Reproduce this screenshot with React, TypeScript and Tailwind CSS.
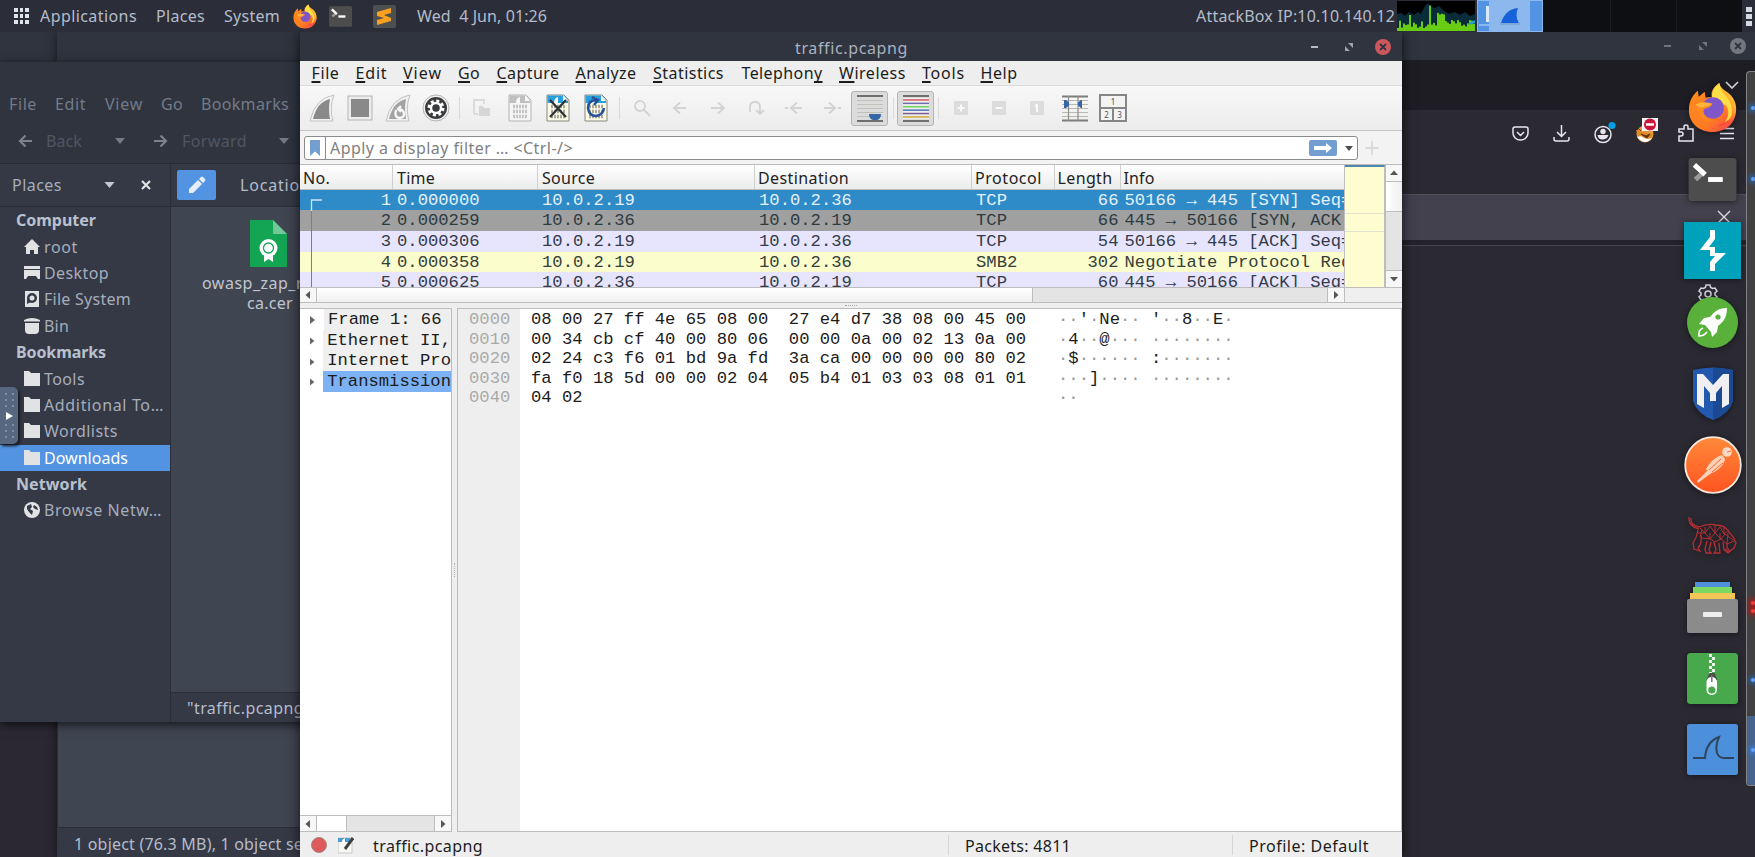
import { useLayoutEffect, useRef, useState } from "react";
import type { ReactNode } from "react";

/** Single line label, tracked so that it fills the given width. */
function T({ w, className = "", children }: { w: number; className?: string; children: ReactNode }) {
  const ref = useRef<HTMLSpanElement>(null);
  const [gap, setGap] = useState(0);
  useLayoutEffect(() => {
    const el = ref.current;
    if (!el) return;
    const n = (el.textContent || "").length;
    setGap((w - el.getBoundingClientRect().width) / Math.max(n, 1));
  }, [w]);
  return (
    <span ref={ref} className={`inline-block shrink-0 whitespace-pre ${className}`} style={{ letterSpacing: gap }}>
      {children}
    </span>
  );
}

/* ---------- small drawings ---------- */

function Firefox({ className }: { className: string }) {
  return (
    <svg viewBox="0 0 50 52" className={className}>
      <defs>
        <linearGradient id="ffa" x1="0.9" y1="0" x2="0.2" y2="1">
          <stop offset="0" stopColor="#ffe14a" />
          <stop offset="0.35" stopColor="#ffb02e" />
          <stop offset="0.7" stopColor="#ff5a2c" />
          <stop offset="1" stopColor="#f0305e" />
        </linearGradient>
        <linearGradient id="ffb" x1="0" y1="0" x2="1" y2="1">
          <stop offset="0" stopColor="#ff8a1e" />
          <stop offset="0.6" stopColor="#ff7b22" />
          <stop offset="1" stopColor="#f23a55" />
        </linearGradient>
      </defs>
      <path d="M10 9l1 6 6-5 1 6c3-1 6-1 9 0l22 11c1 14-10 24-24 24S0 41 1 27c0-7 4-14 9-18z" fill="url(#ffb)" />
      <path d="M32 1c-9 6-9 12-7 17l13 12c3 6-1 13-8 15 12 0 18-8 19-16 1-7-3-14-8-18-4-3-8-5-9-10z" fill="url(#ffa)" />
      <path d="M32 1c-8 6-8 12-7 17l14 6c4 6 2 13-2 17 8-3 9-10 7-17-2-9-11-12-12-23z" fill="#ffdf45" />
      <circle cx="25.500" cy="26.500" r="11" fill="#7f56c9" />
      <path d="M8 23c5-4 11-2 17-1-1 4-6 4-9 6-1 6 3 10 9 12-10 1-16-6-17-17z" fill="#ff8b22" />
      <path d="M8 23c5-3 11-2 16-1-2 3-6 3-9 4-4 0-6-1-7-3z" fill="#ffb43a" />
    </svg>
  );
}

function Folder() {
  return (
    <svg viewBox="0 0 16 16" className="h-4 w-4">
      <path d="M0 0h5l2 2h9v13H0z" fill="#e1e2e3" />
    </svg>
  );
}

const sideIcons: Record<string, ReactNode> = {
  root: (
    <svg viewBox="0 0 16 16" className="h-4 w-4">
      <path d="M8 0l8 8h-2v7h-4v-4H6v4H2V8H0z" fill="#e1e2e3" />
    </svg>
  ),
  Desktop: (
    <svg viewBox="0 0 16 16" className="h-4 w-4">
      <path d="M0 1h16v3H0zM0 5h16v9h-2l-2-3H4l-2 3H0z" fill="#e1e2e3" />
    </svg>
  ),
  "File System": (
    <svg viewBox="0 0 16 16" className="h-4 w-4">
      <path d="M1 0h14v16H1z" fill="#e1e2e3" />
      <circle cx="8" cy="7" r="5" fill="#353945" />
      <circle cx="8" cy="7" r="2.500" fill="#e1e2e3" />
      <path d="M3 8v5l4-2z" fill="#353945" />
    </svg>
  ),
  Bin: (
    <svg viewBox="0 0 16 16" className="h-4 w-4">
      <path d="M0 2q8-4 16 0v1.500H0zM1 5h14v7q0 4-4 4H5q-4 0-4-4z" fill="#e1e2e3" />
    </svg>
  ),
  "Browse Netw…": (
    <svg viewBox="0 0 16 16" className="h-4 w-4">
      <circle cx="8" cy="8" r="8" fill="#e1e2e3" />
      <path d="M3 4l4-2 1 3-2 2 3 2-1 4-3-3-2-3zM10 3l3 2 1 3-3-1-2-2z" fill="#353945" />
    </svg>
  ),
};

function Caret({ className }: { className: string }) {
  return (
    <svg viewBox="0 0 10 6" className={className}>
      <path d="M0 0h10L5 6z" fill="currentColor" />
    </svg>
  );
}

/* ---------- top panel ---------- */

function TerminalIcon({ className }: { className: string }) {
  return (
    <svg viewBox="0 0 49 44" className={className}>
      <rect width="49" height="44" rx="3" fill="#4d4d4d" />
      <path d="M7 22l8-7" stroke="#9a9a9a" strokeWidth="5" />
      <path d="M6 7l11 10" stroke="#fff" strokeWidth="5" />
      <path d="M20 22h15" stroke="#fff" strokeWidth="5" />
    </svg>
  );
}

function CpuGraph() {
  const n = 39;
  const bars = Array.from({ length: n }, (_, i) => {
    const r = Math.abs(Math.sin(i * 12.9898) * 43758.5453) % 1;
    const hump = i > 19 && i < 24 ? 9 : 0;
    return 3 + r * 8 + hump + (i === 16 ? 15 : 0) + (i === 6 ? 8 : 0);
  });
  return (
    <svg viewBox="0 0 78 30" className="h-[30px] w-[78px] bg-black">
      <path d="M0 30V13l5-1 3 3 4-4 5 3 4-3 3 2 4-8 3-3 3 4 4 1 4-2 4 4 6 4 6-2 5 3 5-3 5 4 5-2V30z" fill="#0a2b38" />
      {bars.map((h, i) => (
        <rect key={i} x={i * 2} y={30 - h} width="2" height={h} fill="#67cc12" />
      ))}
      <path d="M72 22l6-3v3l-6 2z" fill="#1d9be0" />
    </svg>
  );
}

function TopPanel() {
  return (
    <header className="absolute inset-x-0 top-0 flex h-8 items-center bg-[#2b2e39] text-[#b4bccb]">
      <div className="ml-[14px] grid w-[15px] grid-cols-3 gap-[2px]">
        {Array.from({ length: 9 }, (_, i) => (
          <i key={i} className="h-[4px] w-[3.600px] bg-[#dfe3ea]" />
        ))}
      </div>
      <T w={97} className="ml-[11px]">Applications</T>
      <T w={49} className="ml-[19px]">Places</T>
      <T w={56} className="ml-[19px]">System</T>
      <Firefox className="ml-[13px] h-[25px] w-[24px]" />
      <TerminalIcon className="ml-[12px] h-[21px] w-[23px]" />
      <svg viewBox="0 0 23 23" className="ml-[21px] h-[23px] w-[23px]">
        <rect width="23" height="23" rx="2" fill="#4e4f50" />
        <path d="M4 7l14-4v5l-7 2 7 3v3L4 20v-5l7-2-7-2z" fill="#fba01f" />
      </svg>
      <T w={130} className="ml-[21px]">{"Wed  4 Jun, 01:26"}</T>
      <T w={199} className="ml-auto">AttackBox IP:10.10.140.12</T>
      <div className="ml-[2px]">
        <CpuGraph />
      </div>
      <div className="ml-[2px] flex h-8 w-[265px] bg-[#0e0f13]">
        <div className="flex h-8 w-[66px] border border-[#8ab8ee] bg-[#5294e2]">
          <div className="flex w-[11px] flex-col items-end justify-between py-[5px]">
            <i className="h-[16px] w-[3px] bg-[#dbe9fa]" />
            <i className="h-[2px] w-[10px] bg-[#8ab8ee]" />
          </div>
          <div className="flex w-[41px] items-center justify-center bg-[#8cb8ee]">
            <svg viewBox="0 0 20 18" className="h-[18px] w-[20px]">
              <path d="M1 16C4 7 9 2 18 1c-2 5-2 10 1 15z" fill="#1762d8" />
              <path d="M0 17h20" stroke="#6f93c2" />
            </svg>
          </div>
        </div>
        <div className="w-[68px] border-r border-[#1a1b20]" />
        <div className="w-[66px] border-r border-[#1a1b20]" />
      </div>
      <div className="mr-[3px] ml-[4px] flex flex-col gap-[2px]">
        <i className="h-[5px] w-[6px] bg-[#d5d9e0]" />
        <i className="h-[5px] w-[6px] bg-[#d5d9e0]" />
        <i className="h-[5px] w-[6px] bg-[#d5d9e0]" />
      </div>
    </header>
  );
}

/* ---------- file manager windows ---------- */

function SideHead({ w, children }: { w: number; children: string }) {
  return (
    <div className="flex h-[26.400px] items-center pl-[16px] font-bold text-[#b9c1d0]">
      <T w={w}>{children}</T>
    </div>
  );
}

function SideItem({ w, name, active = false }: { w: number; name: string; active?: boolean }) {
  return (
    <div
      className={`flex h-[26.400px] items-center gap-[4px] pl-[24px] ${
        active ? "bg-[#5294e2] text-white" : "text-[#a6adbb]"
      }`}
    >
      {sideIcons[name] ?? <Folder />}
      <T w={w}>{name}</T>
    </div>
  );
}

function BackWindow() {
  return (
    <section className="absolute top-8 left-[57px] flex h-[825px] w-[260px] flex-col bg-[#2f343f] shadow-[0_0_10px_rgba(0,0,0,0.6)]">
      <div className="h-[29px]" />
      <div className="flex-1 border-l border-[#2b2e39] bg-[#404552]" />
      <div className="flex h-[30px] items-center border-t border-[#2b2e39] bg-[#353945] pl-[17px] text-[#b4bccb]">
        <T w={229} className="mt-[2px]">1 object (76.3 MB), 1 object se</T>
      </div>
    </section>
  );
}

function FileManager() {
  return (
    <section className="absolute top-[61px] left-0 flex h-[661px] w-[310px] flex-col border-t border-[#252933] bg-[#2f343f] shadow-[0_3px_9px_rgba(0,0,0,0.65)]">
      <div className="flex h-[84px] items-center text-[#747a88]">
        <T w={28} className="ml-[9px]">File</T>
        <T w={31} className="ml-[18px]">Edit</T>
        <T w={38} className="ml-[19px]">View</T>
        <T w={22} className="ml-[18px]">Go</T>
        <T w={88} className="ml-[18px]">Bookmarks</T>
      </div>
      <div className="-mt-[25px] flex h-[42px] items-center pb-[3px] text-[#50565f]">
        <svg viewBox="0 0 14 14" className="ml-[18px] h-[14px] w-[14px]">
          <path d="M14 7H2M7.500 1.500L2 7l5.500 5.500" stroke="#7d828d" strokeWidth="2.200" fill="none" />
        </svg>
        <T w={36} className="ml-[14px] text-[#505663]">Back</T>
        <Caret className="ml-[33px] h-[6px] w-[10px] text-[#747a85]" />
        <svg viewBox="0 0 14 14" className="ml-[29px] h-[14px] w-[14px]">
          <path d="M0 7h12M6.500 1.500L12 7l-5.500 5.500" stroke="#7d828d" strokeWidth="2.200" fill="none" />
        </svg>
        <T w={65} className="ml-[14px] text-[#505663]">Forward</T>
        <Caret className="ml-[32px] h-[6px] w-[10px] text-[#747a85]" />
      </div>
      <div className="flex min-h-0 flex-1 border-t border-[#272a34]">
        <aside className="flex w-[171px] shrink-0 flex-col border-r border-[#2b2e39] bg-[#353945]">
          <div className="flex h-[43px] items-center border-b border-[#2b2e39] bg-[#353945] text-[#a6adbb]">
            <T w={50} className="ml-[12px]">Places</T>
            <Caret className="ml-[42px] h-[6px] w-[11px] text-[#c3c8d1]" />
            <svg viewBox="0 0 10 10" className="ml-[26px] h-[10px] w-[10px]">
              <path d="M1 1l8 8M9 1L1 9" stroke="#dfe2e6" strokeWidth="2.200" />
            </svg>
          </div>
          <SideHead w={80}>Computer</SideHead>
          <SideItem w={34} name="root" />
          <SideItem w={65} name="Desktop" />
          <SideItem w={87} name="File System" />
          <SideItem w={25} name="Bin" />
          <SideHead w={90}>Bookmarks</SideHead>
          <SideItem w={41} name="Tools" />
          <SideItem w={120} name="Additional To…" />
          <SideItem w={74} name="Wordlists" />
          <SideItem w={84} name="Downloads" active />
          <SideHead w={71}>Network</SideHead>
          <SideItem w={118} name="Browse Netw…" />
        </aside>
        <div className="flex flex-1 flex-col bg-[#404552]">
          <div className="flex h-[43px] shrink-0 items-center border-b border-[#2b2e39] bg-[#353945] text-[#b4bccb]">
            <div className="ml-[6px] flex h-[30px] w-[39px] items-center justify-center rounded-[2px] bg-[#5294e2]">
              <svg viewBox="0 0 18 18" className="h-[18px] w-[18px]">
                <path d="M1 17v-4l9-9 4 4-9 9zM11 3l2-2q1-1 2 0l2 2q1 1 0 2l-2 2z" fill="#e8eef7" />
              </svg>
            </div>
            <T w={60} className="ml-[24px]">Locatio</T>
          </div>
          <div className="flex flex-1 flex-col pt-[13px] text-[#c0c6d0]">
            <svg viewBox="0 0 37 47" className="ml-[79px] h-[47px] w-[37px]">
              <path d="M1 0h22l14 14v32q0 1-1 1H1q-1 0-1-1V1q0-1 1-1z" fill="#13a454" />
              <path d="M23 0l14 14H24q-1 0-1-1z" fill="#74c898" />
              <path d="M14 34l9 0v8l-4.500-3-4.500 3z" fill="#fff" />
              <circle cx="18.500" cy="28" r="9" fill="#fff" />
              <circle cx="18.500" cy="28" r="5" fill="none" stroke="#13a454" strokeWidth="1.300" />
            </svg>
            <T w={101} className="mt-[6px] ml-[31px] self-start leading-[20px]">owasp_zap_r</T>
            <T w={46} className="ml-[76px] self-start leading-[20px]">ca.cer</T>
          </div>
          <div className="flex h-[30px] items-center border-t border-[#2b2e39] bg-[#353945] text-[#b4bccb]">
            <T w={117} className="mt-px ml-[16px]">"traffic.pcapng</T>
          </div>
        </div>
      </div>
    </section>
  );
}

/* ---------- browser window ---------- */

function Browser() {
  return (
    <section className="absolute top-8 right-0 flex h-[825px] w-[360px] flex-col bg-[#2b2a33]">
      <div className="flex h-[28px] items-center justify-end bg-[#2f343f] pr-[9px]">
        <i className="mr-[28px] h-[2px] w-[7px] bg-[#70747e]" />
        <svg viewBox="0 0 8 8" className="mr-[23px] h-[8px] w-[8px]">
          <path d="M3 0h5v5zM0 3l5 5H0z" fill="#70747e" />
        </svg>
        <svg viewBox="0 0 16 16" className="h-4 w-4">
          <circle cx="8" cy="8" r="8" fill="#74777e" />
          <path d="M5 5l6 6M11 5l-6 6" stroke="#2f343f" strokeWidth="1.800" />
        </svg>
      </div>
      <div className="flex h-[50px] justify-end bg-[#1e1d24] pt-[21px] pr-[16px]">
        <svg viewBox="0 0 14 8" className="h-[8px] w-[14px]">
          <path d="M1 1l6 6 6-6" stroke="#d6d5dc" strokeWidth="1.600" fill="none" />
        </svg>
      </div>
      <div className="flex h-[84px] items-start pt-[8px] pl-[117px] text-[#e8e7ee]">
        <svg viewBox="0 0 17 18" className="mt-[7px] h-[18px] w-[17px]" fill="none" stroke="currentColor" strokeWidth="1.500">
          <path d="M3 2h11q2 0 2 2v4a7.500 7 0 0 1-15 0V4q0-2 2-2zM5 7l3.500 3.500L12 7" />
        </svg>
        <svg viewBox="0 0 17 18" className="ml-[24px] mt-[7px] h-[18px] w-[17px]" fill="none" stroke="currentColor" strokeWidth="1.500">
          <path d="M8.500 0v11M4 7l4.500 4.500L13 7M1 12v2q0 2 2 2h11q2 0 2-2v-2" />
        </svg>
        <svg viewBox="0 0 22 24" className="ml-[24px] mt-[2px] h-[24px] w-[22px]">
          <circle cx="9" cy="14.500" r="8" fill="none" stroke="currentColor" strokeWidth="1.500" />
          <circle cx="9" cy="11.500" r="2.700" fill="currentColor" />
          <path d="M3.500 15h11q-1 4-5.500 4.500T3.500 15z" fill="currentColor" />
          <circle cx="18" cy="5.500" r="3.500" fill="#00a0e8" />
        </svg>
        <svg viewBox="0 0 23 26" className="ml-[19px] h-[26px] w-[23px]">
          <circle cx="10" cy="16" r="8.500" fill="#e9973a" />
          <path d="M1 12l6 2 4 1 7 1-3 6-5 1-6-2z" fill="#e08a22" />
          <path d="M2 19q4 5 8 5t7-4l-4 1-4-1-3-2z" fill="#fff" />
          <path d="M3 10l3 3M6 16l5 2 4-2-3 4z" stroke="#5b3414" fill="#5b3414" />
          <rect x="7" width="16" height="13" fill="#f5f3f3" />
          <circle cx="15" cy="6.500" r="6" fill="#c9163a" />
          <path d="M11 6.500h8" stroke="#fff" strokeWidth="2.500" />
        </svg>
        <svg viewBox="0 0 16 18" className="ml-[20px] mt-[6px] h-[18px] w-[16px]" fill="none" stroke="currentColor" strokeWidth="1.500">
          <path d="M1 17V12h2q2 0 2-2T3 8H1V5h5V3a2 2 0 0 1 4 0v2h5v12z" />
        </svg>
        <svg viewBox="0 0 14 14" className="ml-[26px] mt-[9px] h-[14px] w-[14px]" stroke="currentColor" strokeWidth="1.500">
          <path d="M0 1.500h14M0 6.500h14M0 11.500h14" />
        </svg>
      </div>
      <div className="flex h-[46px] justify-end border-t border-[#504f5a] bg-[#42414d] pt-[15px] pr-[24px]">
        <svg viewBox="0 0 14 14" className="h-[14px] w-[14px]">
          <path d="M1 1l12 12M13 1L1 13" stroke="#dddce3" strokeWidth="1.400" />
        </svg>
      </div>
      <div className="h-[6px] border-b border-[#46454f] bg-[#24232b]" />
      <div className="flex justify-end pt-[38px] pr-[37px]">
        <svg viewBox="0 0 20 20" className="h-[20px] w-[20px]" fill="none" stroke="#d5d4dc" strokeWidth="1.500">
          <circle cx="10" cy="10" r="3" />
          <path d="M8 1h4l.600 2.500 2 1L17 4l2 3.200L17 9v2l2 1.800-2 3.200-2.400-.5-2 1L12 19H8l-.600-2.500-2-1L3 16l-2-3.200L3 11V9L1 7.200 3 4l2.400.5 2-1z" />
        </svg>
      </div>
    </section>
  );
}

/* ---------- dock ---------- */

function Dock() {
  return (
    <>
      <div className="absolute top-[71px] right-0 flex h-[715px] w-[9px] flex-col items-end rounded-l-[4px] border border-r-0 border-[#858585] bg-[#414141]">
        <i className="mt-[34px] h-[4px] w-[4px] rounded-full bg-[#5ba3ff] shadow-[0_0_5px_2px_#2b66b5]" />
        <i className="mt-[67px] h-[4px] w-[4px] rounded-full bg-[#5ba3ff] shadow-[0_0_5px_2px_#2b66b5]" />
        <i className="mt-[420px] h-[4px] w-[4px] rounded-full bg-[#ff3b3b] shadow-[0_0_5px_2px_#c11]" />
        <i className="mt-[4px] h-[4px] w-[4px] rounded-full bg-[#ff3b3b] shadow-[0_0_5px_2px_#c11]" />
        <i className="mt-[65px] h-[4px] w-[4px] rounded-full bg-[#5ba3ff] shadow-[0_0_5px_2px_#2b66b5]" />
        <div className="mt-[34px] flex w-full flex-1 justify-end rounded-bl-[3px] bg-[#45648f] pt-[32px]">
          <i className="h-[4px] w-[4px] rounded-full bg-[#5ba3ff] shadow-[0_0_5px_2px_#3b7ed5]" />
        </div>
      </div>
      <nav className="absolute top-[82px] left-[1684px] flex w-[57px] flex-col items-center drop-shadow-[0_1px_3px_rgba(0,0,0,0.5)]">
        <Firefox className="h-[51px] w-[49px]" />
        <TerminalIcon className="mt-[25px] h-[43px] w-[49px]" />
        <svg viewBox="0 0 57 57" className="mt-[21px] h-[57px] w-[57px]">
          <rect width="57" height="57" fill="#00a2bb" />
          <path d="M26 8h5v9l-6 8h6v6h11L31 42v7h-5v-9l5-6h-5v-6H16l10-13z" fill="#fff" />
        </svg>
        <svg viewBox="0 0 51 51" className="mt-[18px] h-[51px] w-[51px]">
          <circle cx="25.500" cy="25.500" r="25.500" fill="#59b13c" />
          <path d="M40 11c-8 0-12 3-17 9l-6 1-5 6 6 1 6 7 1 5 5-5 1-6c7-5 9-11 9-18z" fill="#fff" />
          <circle cx="31" cy="20" r="2.600" fill="#59b13c" />
          <path d="M16 31q-5 2-4 8 5 0 8-4" fill="none" stroke="#fff" strokeWidth="1.500" />
        </svg>
        <svg viewBox="0 0 40 53" className="mt-[19px] h-[53px] w-[40px]">
          <path d="M0 3q20-5 40 0v31q-4 13-20 19Q4 47 0 34z" fill="#2259ae" />
          <path d="M20 1q11 0 20 2v31q-4 13-20 19z" fill="#1c4993" />
          <path d="M4 7h6l10 11L30 7h6v30l-7 4V19l-6 7v8h-6v-8l-6-7v22l-7-4z" fill="#f0f0f2" />
        </svg>
        <svg viewBox="0 0 58 58" className="mt-[16px] h-[58px] w-[58px]">
          <defs>
            <linearGradient id="pm" x1="0" y1="0" x2="0" y2="1">
              <stop offset="0" stopColor="#ff8a3a" />
              <stop offset="1" stopColor="#ff5320" />
            </linearGradient>
          </defs>
          <circle cx="29" cy="29" r="27.800" fill="url(#pm)" stroke="#fbe9df" strokeWidth="1.800" />
          <circle cx="43" cy="16" r="4.800" fill="#fdd9c4" />
          <path d="M38 19l3 4c-1 7-8 12-15 15l-12 9-1-2 11-11c-3 1-2-2 0-4 3-5 8-9 14-11z" fill="#fdd0b8" />
          <path d="M37 23L25 34M39 27L28 36" stroke="#ff6a2c" strokeWidth="1" />
          <path d="M43 16l4-1" stroke="#ff7a36" strokeWidth="1" />
        </svg>
        <svg viewBox="0 0 51 40" className="mt-[22px] h-[40px] w-[51px]" fill="none" stroke="#b42f34" strokeWidth="1.300">
          <path d="M2 1q-1 9 10 12M4 2q-1 7 8 9 9-4 17-2 9 0 13 7 5 5 7 11l-2 5-5 4-4-3" />
          <path d="M11 14q-1 7-5 13l1 6 6 2-2-3 3-5M14 19q1 7-2 12M20 25l-2 8 1 4h5l-2-3 2-8M27 26l2 8-2 3h6l-1-10M36 26l1 8 4 3 2-2-3-3v-5" />
          <path d="M13 12l5 5 5-7 5 7 5-6 4 7 5-4M11 17l7 0 5 6 5-6 6 6 4-5 8 6M15 22l8 1 5 3 6-3 6 5 7-3M18 11v6M28 9v8M37 12v6M23 17v6M33 17v6M41 17l-1 10M15 13l-2 8" strokeWidth="1" />
        </svg>
        <svg viewBox="0 0 51 51" className="mt-[26px] h-[51px] w-[51px]">
          <path d="M8 0h35v6H8z" fill="#4f8fdb" />
          <path d="M6 5h39v7H6z" fill="#7cd860" />
          <path d="M3 11h45v7H3z" fill="#f3c556" />
          <rect y="17" width="51" height="34" rx="2" fill="#8b8b8b" />
          <rect x="16" y="30" width="19" height="5" rx="1" fill="#ededed" />
        </svg>
        <svg viewBox="0 0 51 51" className="mt-[20px] h-[51px] w-[51px]">
          <rect width="51" height="51" rx="3.500" fill="#47a84c" />
          <path d="M23.500 1v20M26.500 4v17" stroke="#fff" strokeWidth="2.700" strokeDasharray="3 3" />
          <path d="M19.500 27l3-7h5l3 7z" fill="#4a4a4a" />
          <rect x="19.500" y="24" width="10.500" height="18" rx="5" fill="#fff" />
          <circle cx="24.800" cy="37" r="3.600" fill="#47a84c" />
          <path d="M24.800 22v7" stroke="#777" strokeWidth="1.500" />
        </svg>
        <svg viewBox="0 0 51 51" className="mt-[20px] h-[51px] w-[51px]">
          <rect width="51" height="51" rx="2.500" fill="#4c8fdb" />
          <path d="M6 34h12q1-16 14-21-4 9-2 16 2 5 7 5h10" fill="none" stroke="#30445c" strokeWidth="2" />
        </svg>
      </nav>
      <div className="absolute top-[387px] left-0 flex h-[57px] w-[18px] flex-col items-end justify-between rounded-r-[5px] bg-[#56677f] py-[6px] pr-[4px] shadow-[2px_2px_3px_#171a20]">
        <Dots />
        <svg viewBox="0 0 7 8" className="mr-[1px] h-[8px] w-[7px]">
          <path d="M0 0l7 4-7 4z" fill="#fff" />
        </svg>
        <Dots />
      </div>
    </>
  );
}

function Dots() {
  return (
    <div className="grid grid-cols-2 gap-x-[5px] gap-y-[4px]">
      {Array.from({ length: 6 }, (_, i) => (
        <i key={i} className="h-[2px] w-[2px] bg-[#7e8ea5]" />
      ))}
    </div>
  );
}

/* ---------- Wireshark ---------- */

const menus: { pre: string; key: string; post: string; w: number; step: string }[] = [
  { pre: "", key: "F", post: "ile", w: 28, step: "w-[44px]" },
  { pre: "", key: "E", post: "dit", w: 32, step: "w-[47.500px]" },
  { pre: "", key: "V", post: "iew", w: 39, step: "w-[55px]" },
  { pre: "", key: "G", post: "o", w: 22, step: "w-[38.500px]" },
  { pre: "", key: "C", post: "apture", w: 63, step: "w-[79px]" },
  { pre: "", key: "A", post: "nalyze", w: 61, step: "w-[77.500px]" },
  { pre: "", key: "S", post: "tatistics", w: 71, step: "w-[88.500px]" },
  { pre: "Telephon", key: "y", post: "", w: 81, step: "w-[97.500px]" },
  { pre: "", key: "W", post: "ireless", w: 67, step: "w-[83px]" },
  { pre: "", key: "T", post: "ools", w: 43, step: "w-[58.500px]" },
  { pre: "", key: "H", post: "elp", w: 37, step: "w-[50px]" },
];

function Fin({ restart = false }: { restart?: boolean }) {
  return (
    <svg viewBox="0 0 26 28" className="h-[28px] w-[26px]">
      <path d="M1 27Q6 4 25 1q-5 13-1 26z" fill="#f1f1f1" stroke="#c2c2c2" />
      <path d="M4 25Q8 8 21 5q-2 10 0 20z" fill={restart ? "#a3a3a3" : "#898989"} />
      {restart && (
        <path d="M11 16q-2 7 3 8 5 0 5-4t-5-5m2-3l-3 3 3 3" fill="none" stroke="#f6f6f6" strokeWidth="2.400" />
      )}
    </svg>
  );
}

function Doc({ kind }: { kind: "plain" | "close" | "reload" }) {
  const plain = kind === "plain";
  return (
    <svg viewBox="0 0 24 28" className="h-[28px] w-[24px]">
      <path d="M1 1h17l5 5v21H1z" fill={plain ? "#f5f5f5" : "#fbfbe8"} stroke={plain ? "#b4b4b4" : "#85867e"} />
      <path d="M1.500 1.500h16L22 6v3H1.500z" fill={plain ? "#c0c0c0" : "#2a9fe0"} />
      <path d="M8 9q0-5 4-6v6zM17 1v6h5z" fill="#f8f8f8" />
      <path d="M5 12.500h14M5 17.500h14M5 22.500h14" stroke={plain ? "#c4c4c4" : "#a9a99a"} strokeWidth="3.500" strokeDasharray="2 1" />
      {kind === "close" && <path d="M4 6l16 17M20 6L4 23" stroke="#2c3236" strokeWidth="2.300" />}
      {kind === "reload" && (
        <path d="M13 6q-9 0-9 8 1 8 8 8 7-1 8-8M8 3l6 3-4 5" fill="none" stroke="#27509a" strokeWidth="2.500" />
      )}
    </svg>
  );
}

function Faint({ d }: { d: string }) {
  return (
    <svg viewBox="0 0 18 18" className="h-[18px] w-[18px]" fill="none" stroke="#d3d3d3" strokeWidth="1.900">
      <path d={d} />
    </svg>
  );
}

function FaintBox({ d }: { d: string }) {
  return (
    <svg viewBox="0 0 14 14" className="h-[14px] w-[14px]">
      <rect width="14" height="14" rx="1" fill="#dcdcdc" />
      <path d={d} stroke="#fafafa" strokeWidth="2" fill="none" />
    </svg>
  );
}

const Cell = ({ children }: { children: ReactNode }) => (
  <div className="flex w-[38px] shrink-0 items-center justify-center">{children}</div>
);
const Sep = () => (
  <div className="flex w-[8px] shrink-0 items-center justify-center">
    <i className="h-[22px] w-px bg-[#d9d9d9]" />
  </div>
);
const Toggle = ({ children }: { children: ReactNode }) => (
  <div className="flex h-[35px] w-[37px] shrink-0 items-center justify-center rounded-[3px] border border-[#b4b4b4] bg-[#dcdcdc]">
    {children}
  </div>
);

const stripes = ["#d5565c", "#6f6fae", "#6fd35d", "#4d74b3", "#7c5c93", "#cfa835"];

function Toolbar() {
  return (
    <div className="flex h-[45px] shrink-0 items-center border-b border-[#c6c6c6] bg-linear-to-b from-[#f8f8f8] to-[#ececec] pl-[3px]">
      <Cell><Fin /></Cell>
      <Cell>
        <svg viewBox="0 0 26 26" className="h-[26px] w-[26px]">
          <rect x="1" y="1" width="24" height="24" fill="#ececec" stroke="#b5b5b5" />
          <rect x="4" y="4" width="18" height="18" fill="#898989" />
        </svg>
      </Cell>
      <Cell><Fin restart /></Cell>
      <Cell>
        <svg viewBox="0 0 28 28" className="h-[28px] w-[28px]">
          <circle cx="14" cy="14" r="13" fill="#f1f1f1" stroke="#b4b4b4" />
          <circle cx="14" cy="14" r="11" fill="#3a3b3d" />
          <circle cx="14" cy="14" r="7" fill="none" stroke="#fff" strokeWidth="3" strokeDasharray="3 2.500" />
          <circle cx="14" cy="14" r="5" fill="none" stroke="#fff" strokeWidth="2.500" />
        </svg>
      </Cell>
      <Sep />
      <Cell>
        <svg viewBox="0 0 18 18" className="h-[18px] w-[18px]">
          <path d="M1 15V1h10v4M1 15h4" fill="none" stroke="#dadada" strokeWidth="1.800" />
          <path d="M6 7h4l1 2h6v8H6z" fill="#d6d6d6" />
        </svg>
      </Cell>
      <Cell><Doc kind="plain" /></Cell>
      <Cell><Doc kind="close" /></Cell>
      <Cell><Doc kind="reload" /></Cell>
      <Sep />
      <Cell><Faint d="M12 7a5 5 0 1 1-10 0a5 5 0 1 1 10 0M11 11l6 6" /></Cell>
      <Cell><Faint d="M15 9H3M9 3.500L3 9l6 5.500" /></Cell>
      <Cell><Faint d="M2 9h13M9 3.500l6 5.500-6 5.500" /></Cell>
      <Cell><Faint d="M3 13V8q0-5 5-5t5 5v6M9 11l4 4 4-4" /></Cell>
      <Cell><Faint d="M17 9H7M12 3.500L6 9l6 5.500M0 9h3" /></Cell>
      <Cell><Faint d="M1 9h10M6 3.500l6 5.500-6 5.500M15 9h3" /></Cell>
      <Toggle>
        <svg viewBox="0 0 26 27" className="h-[27px] w-[26px]">
          <path d="M0 5.500h26M0 9.500h26M0 13.500h26M0 17.500h26M0 21.500h26" stroke="#bfc0b8" />
          <path d="M0 1h26M0 26h26" stroke="#6f706e" strokeWidth="1.800" />
          <path d="M12 19h12q0 5-4 6h-4q-4-1-4-6z" fill="#3465a4" />
        </svg>
      </Toggle>
      <div className="w-px" />
      <Sep />
      <Toggle>
        <svg viewBox="0 0 26 27" className="h-[27px] w-[26px]">
          <path d="M0 3h26v21H0z" fill="#eee" />
          {stripes.map((c, i) => (
            <rect key={c} x="0" y={4.2 + i * 3.4} width="26" height="1.500" fill={c} />
          ))}
          <path d="M0 1h26M0 26h26" stroke="#6f706e" strokeWidth="1.800" />
        </svg>
      </Toggle>
      <Sep />
      <Cell><FaintBox d="M7 3.500v7M3.500 7h7" /></Cell>
      <Cell><FaintBox d="M3.500 7h7" /></Cell>
      <Cell><FaintBox d="M5 5l2-1v7" /></Cell>
      <Cell>
        <svg viewBox="0 0 26 27" className="h-[27px] w-[26px]">
          <path d="M0 5.500h26M0 9.500h26M0 13.500h26M0 17.500h26M0 21.500h26" stroke="#b9bab2" />
          <path d="M0 1.500h26M0 25.500h26" stroke="#7d7e7b" strokeWidth="2.200" />
          <path d="M6.500 1v25M16 1v25" stroke="#8d8e8a" strokeWidth="1.200" />
          <path d="M2 5h2l3 2.500v3L4 13H2zM20 5h-1l-3 2.500v3l3 2.500h1z" fill="#3465a4" />
        </svg>
      </Cell>
      <Cell>
        <div className="flex h-[28px] w-[28px] flex-col border-2 border-[#868686] bg-[#f3f3f3] text-[8px] leading-none text-[#555]">
          <div className="flex flex-1 items-center justify-center border-b-2 border-[#868686]">1</div>
          <div className="flex flex-1">
            <span className="flex flex-1 items-center justify-center border-r-2 border-[#868686]">2</span>
            <span className="flex flex-1 items-center justify-center">3</span>
          </div>
        </div>
      </Cell>
    </div>
  );
}

const packets = [
  { no: 1, time: "0.000000", src: "10.0.2.19", dst: "10.0.2.36", proto: "TCP", len: 66, info: "50166 → 445 [SYN] Seq=", c: "bg-[#2f8bc8] text-[#e3f1fb]" },
  { no: 2, time: "0.000259", src: "10.0.2.36", dst: "10.0.2.19", proto: "TCP", len: 66, info: "445 → 50166 [SYN, ACK", c: "bg-[#a0a0a0] text-[#2c3b40]" },
  { no: 3, time: "0.000306", src: "10.0.2.19", dst: "10.0.2.36", proto: "TCP", len: 54, info: "50166 → 445 [ACK] Seq=", c: "bg-[#e6e5fd] text-[#343b49]" },
  { no: 4, time: "0.000358", src: "10.0.2.19", dst: "10.0.2.36", proto: "SMB2", len: 302, info: "Negotiate Protocol Req", c: "bg-[#fcfdcc] text-[#343f3a]" },
  { no: 5, time: "0.000625", src: "10.0.2.36", dst: "10.0.2.19", proto: "TCP", len: 60, info: "445 → 50166 [ACK] Seq=", c: "bg-[#e6e5fd] text-[#343b49]" },
];

const cols = "grid grid-cols-[93px_145px_217px_217px_82.500px_66px_224px]";
const mono = "font-['Liberation_Mono',monospace] text-[17.200px]";

function Arrow({ d, className = "w-[16px]" }: { d: string; className?: string }) {
  return (
    <div className={`flex shrink-0 items-center justify-center bg-[#f7f7f7] ${className}`}>
      <svg viewBox="0 0 8 8" className="h-[8px] w-[8px]">
        <path d={d} fill="#555" />
      </svg>
    </div>
  );
}

const LEFT = "M6 0v8L1.500 4z";
const RIGHT = "M2 0v8l4.500-4z";

function PacketList() {
  const heads: [string, number][] = [
    ["No.", 27], ["Time", 38], ["Source", 53], ["Destination", 91], ["Protocol", 67], ["Length", 55], ["Info", 31],
  ];
  return (
    <div className="flex h-[139px] shrink-0 border-y border-[#bdbdbd] bg-white">
      <div className="flex w-[1045px] shrink-0 flex-col overflow-hidden border-r border-[#bdbdbd]">
        <div className={`${cols} h-[24.500px] shrink-0 border-b border-[#bdbdbd] bg-linear-to-b from-white to-[#ececec]`}>
          {heads.map(([h, w], i) => (
            <div key={h} className={`flex items-center border-r border-[#cfcfcf] pt-[2px] text-[#222] ${i > 0 && i < 3 ? "pl-[4px]" : "pl-[3px]"}`}>
              <T w={w}>{h}</T>
            </div>
          ))}
        </div>
        <div className="relative h-[97px] shrink-0 overflow-hidden">
          {packets.map((p) => (
            <div key={p.no} className={`${cols} ${mono} ${p.c} h-[20.700px] pt-px whitespace-pre leading-[20px]`}>
              <span className="pr-[2px] text-right">{p.no}</span>
              <span className="pl-[4px]">{p.time}</span>
              <span className="pl-[4px]">{p.src}</span>
              <span className="pl-[4px]">{p.dst}</span>
              <span className="pl-[4px]">{p.proto}</span>
              <span className="pr-[2px] text-right">{p.len}</span>
              <span className="pl-[4px]">{p.info}</span>
            </div>
          ))}
          <svg viewBox="0 0 20 97" className="absolute top-0 left-[8px] h-[97px] w-[20px]" fill="none">
            <path d="M3.500 97V21" stroke="#74808c" />
            <path d="M3.500 21V10H14" stroke="#cfe6f6" strokeWidth="1.300" />
          </svg>
        </div>
        <div className="flex flex-1 border-t border-[#bdbdbd] bg-[#e4e4e4]">
          <Arrow d={LEFT} />
          <div className="w-[717px] border-x border-[#bdbdbd] bg-linear-to-b from-white to-[#f0f0f0]" />
          <div className="flex-1 border-r border-[#bdbdbd]" />
          <Arrow d={RIGHT} />
        </div>
      </div>
      <div className="flex flex-1 flex-col">
        <div className="flex h-[121.500px]">
          <div className="w-[40px] border-t-2 border-r border-t-[#4f86ab] border-r-[#bdbdbd] bg-[#fdfdcf]">
            <div className="h-[47px] border-b border-[#dfe3d0]" />
            <div className="h-[18px] border-b border-[#dfe3d0]" />
          </div>
          <div className="flex flex-1 flex-col border-l border-[#bdbdbd] bg-[#e4e4e4]">
            <Arrow d="M0 6h8L4 1.500z" className="h-[16px] w-full" />
            <div className="h-[31px] border-y border-[#bdbdbd] bg-linear-to-r from-white to-[#f0f0f0]" />
            <div className="flex-1 border-b border-[#bdbdbd]" />
            <Arrow d="M0 2h8L4 6.500z" className="h-[16px] w-full" />
          </div>
        </div>
        <div className="flex-1 border-t border-[#bdbdbd] bg-[#efefef]" />
      </div>
    </div>
  );
}

const tree = ["Frame 1: 66", "Ethernet II,", "Internet Pro", "Transmission"];

const hex = [
  ["0000", "08 00 27 ff 4e 65 08 00  27 e4 d7 38 08 00 45 00", "··'·Ne·· '··8··E·"],
  ["0010", "00 34 cb cf 40 00 80 06  00 00 0a 00 02 13 0a 00", "·4··@··· ········"],
  ["0020", "02 24 c3 f6 01 bd 9a fd  3a ca 00 00 00 00 80 02", "·$······ :·······"],
  ["0030", "fa f0 18 5d 00 00 02 04  05 b4 01 03 03 08 01 01", "···]···· ········"],
  ["0040", "04 02", "··"],
];

function Wireshark() {
  return (
    <section className="absolute top-8 left-[300px] flex h-[825px] w-[1102px] flex-col bg-[#eeeeee] text-[#1c1c1c] shadow-[0_0_12px_rgba(0,0,0,0.75)]">
      <div className="flex h-[29px] shrink-0 items-center bg-[#2f343f] text-[#a9b1c0]">
        <T w={113} className="mt-[2px] ml-[495px]">traffic.pcapng</T>
        <i className="ml-auto h-[2px] w-[7px] bg-[#b4bac6]" />
        <svg viewBox="0 0 8 8" className="ml-[27px] h-[8px] w-[8px]">
          <path d="M3 0h5v5zM0 3l5 5H0z" fill="#9da3af" />
        </svg>
        <svg viewBox="0 0 16 16" className="mr-[11px] ml-[22px] h-4 w-4">
          <circle cx="8" cy="8" r="8" fill="#cc575d" />
          <path d="M5 5l6 6M11 5l-6 6" stroke="#2f343f" strokeWidth="1.800" />
        </svg>
      </div>
      <div className="flex h-[25px] shrink-0 items-center border-b border-[#dadada] pl-[11.500px]">
        {menus.map((m) => (
          <div key={m.key + m.post} className={`shrink-0 ${m.step}`}>
            <T w={m.w}>
              {m.pre}
              <span className="underline decoration-2 underline-offset-[2px] [text-decoration-skip-ink:none]">{m.key}</span>
              {m.post}
            </T>
          </div>
        ))}
      </div>
      <Toolbar />
      <div className="flex h-[33px] shrink-0 items-center bg-[#f3f3f3] pl-[4px]">
        <div className="mt-px flex h-[24px] w-[1054px] items-center rounded-[3px] border border-[#8b8b8b] bg-white">
          <div className="flex h-full w-[21px] items-center justify-center border-r border-[#8b8b8b]">
            <svg viewBox="0 0 10 16" className="h-[16px] w-[10px]">
              <path d="M0 0h10v16l-5-4.500L0 16z" fill="#729fcf" />
            </svg>
          </div>
          <T w={243} className="ml-[4px] text-[#808080]">{"Apply a display filter … <Ctrl-/>"}</T>
          <div className="ml-auto flex h-[16px] w-[28px] items-center justify-center rounded-[2px] bg-[#729fcf]">
            <svg viewBox="0 0 20 10" className="h-[10px] w-[20px]">
              <path d="M1 3h12V0l6 5-6 5V7H1z" fill="#fff" />
            </svg>
          </div>
          <Caret className="mr-[4px] ml-[8px] h-[5px] w-[8px] text-[#4d4d4d]" />
        </div>
        <svg viewBox="0 0 14 14" className="ml-[7px] h-[14px] w-[14px]">
          <path d="M7 0v14M0 7h14" stroke="#d9d9d9" strokeWidth="1.800" />
        </svg>
      </div>
      <PacketList />
      <div className="flex h-[5px] shrink-0 items-center justify-center">
        <i className="w-[12px] border-t border-dotted border-[#a9a9a9]" />
      </div>
      <div className="flex h-[524px] shrink-0">
        <div className="flex w-[152px] flex-col overflow-hidden border border-l-0 border-[#bdbdbd] bg-white">
          <div className="flex-1">
            {tree.map((t, i) => (
              <div key={t} className="flex h-[20.700px] items-center">
                <svg viewBox="0 0 6 8" className="mt-[2px] ml-[10px] h-[8px] w-[6px]">
                  <path d="M0 0l5 4-5 4z" fill="#666" />
                </svg>
                <div
                  className={`ml-[8px] h-full flex-1 pt-px pl-[4px] leading-[20px] whitespace-pre ${mono} ${
                    i === 3 ? "bg-[#7cb1f3]" : "bg-[#efefef]"
                  }`}
                >
                  {t}
                </div>
              </div>
            ))}
          </div>
          <div className="flex h-[16px] shrink-0 border-t border-[#bdbdbd] bg-[#e4e4e4]">
            <Arrow d={LEFT} />
            <div className="w-[31px] border-x border-[#bdbdbd] bg-white" />
            <div className="flex-1 border-r border-[#bdbdbd]" />
            <Arrow d={RIGHT} />
          </div>
        </div>
        <div className="flex w-[5px] items-center justify-center">
          <i className="h-[14px] border-l border-dotted border-[#b0b0b0]" />
        </div>
        <div className="flex flex-1 border border-[#bdbdbd] bg-white">
          <div className={`w-[62px] bg-[#eeeeee] pt-px pl-[11px] ${mono}`}>
            {hex.map(([o]) => (
              <div key={o} className="h-[19.600px] leading-[19.600px] text-[#aaaaaa]">{o}</div>
            ))}
          </div>
          <div className={`w-[527px] pt-px pl-[11px] ${mono}`}>
            {hex.map(([o, b]) => (
              <div key={o} className="h-[19.600px] leading-[19.600px] whitespace-pre">{b}</div>
            ))}
          </div>
          <div className={`pt-px pl-[11px] ${mono}`}>
            {hex.map(([o, , a]) => (
              <div key={o} className="h-[19.600px] leading-[19.600px] whitespace-pre">
                {a.split("").map((ch, i) => (
                  <span key={i} className={ch === "·" ? "text-[#999]" : ""}>{ch}</span>
                ))}
              </div>
            ))}
          </div>
        </div>
      </div>
      <footer className="flex flex-1 items-center pt-px">
        <i className="ml-[11px] h-[16px] w-[16px] rounded-full border border-[#a08585] bg-[#df5b5b]" />
        <svg viewBox="0 0 16 17" className="ml-[11px] h-[17px] w-[16px]">
          <path d="M0 1h14v15H0z" fill="#f7f7f4" stroke="#c9c9c9" />
          <path d="M0 1h12v4H0z" fill="#4a9fd0" />
          <path d="M4 5q0-3 3-4v5z" fill="#fff" />
          <path d="M15 1L7 12" stroke="#3b4042" strokeWidth="3" />
        </svg>
        <T w={110} className="mt-px ml-[19px]">traffic.pcapng</T>
        <i className="ml-[465px] h-[20px] w-px bg-[#d6d6d6]" />
        <T w={106} className="mt-px ml-[16px]">Packets: 4811</T>
        <i className="ml-[161px] h-[20px] w-px bg-[#d6d6d6]" />
        <T w={120} className="mt-px ml-[16px]">Profile: Default</T>
      </footer>
    </section>
  );
}

export default function App() {
  return (
    <main className="relative h-[857px] w-[1755px] overflow-hidden bg-[#2b2833] font-['Noto_Sans',sans-serif] text-[16px] leading-[20px]">
      <div className="absolute top-8 left-0 h-[29px] w-[57px] bg-[#2f343f]" />
      <BackWindow />
      <FileManager />
      <Browser />
      <Wireshark />
      <TopPanel />
      <Dock />
    </main>
  );
}
